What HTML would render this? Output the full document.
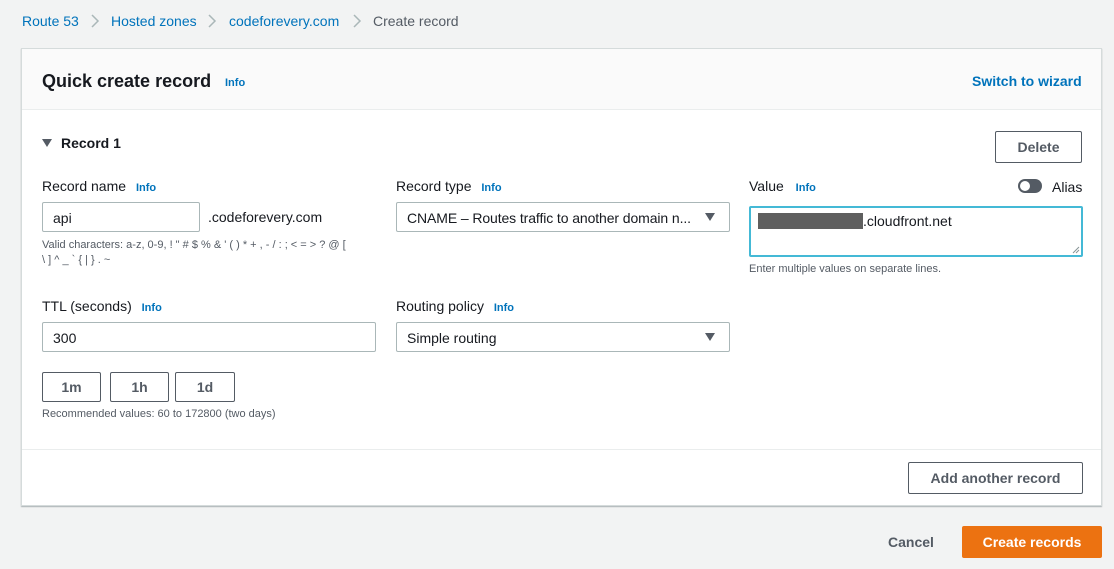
<!DOCTYPE html>
<html><head><style>
*{box-sizing:border-box;margin:0;padding:0}
body{width:1114px;height:569px;background:#f2f3f3;font-family:"Liberation Sans",Arial,sans-serif;color:#16191f;position:relative;overflow:hidden;font-size:14px}
.a{position:absolute;white-space:nowrap}
.blue{color:#0073bb}
.info{color:#0073bb;font-size:11px;font-weight:bold}
.card{position:absolute;left:21px;top:48px;width:1081px;height:458px;background:#fff;border:1px solid #d5dbdb;box-shadow:0 1px 1px rgba(0,28,36,.3)}
.inp{position:absolute;border:1px solid #aab7b8;border-radius:2px;background:#fff;height:30px;padding:7px 10px;font-size:14px;white-space:nowrap;overflow:hidden}
.btn{position:absolute;border:1px solid #545b64;border-radius:2px;background:#fff;font-weight:bold;color:#545b64;font-size:14px;text-align:center}
.lbl{font-size:14px}
.hint{font-size:11px;color:#545b64}
.tri{position:absolute;width:0;height:0;border-left:5px solid transparent;border-right:5px solid transparent;border-top:8px solid #545b64}
</style></head><body>
<div class="a blue" style="left:22px;top:13px">Route 53</div>
<svg class="a" style="left:90px;top:13px" width="10" height="16"><path d="M2 2l6 6-6 6" stroke="#aab7b8" stroke-width="1.5" fill="none"/></svg>
<div class="a blue" style="left:111px;top:13px">Hosted zones</div>
<svg class="a" style="left:207px;top:13px" width="10" height="16"><path d="M2 2l6 6-6 6" stroke="#aab7b8" stroke-width="1.5" fill="none"/></svg>
<div class="a blue" style="left:229px;top:13px">codeforevery.com</div>
<svg class="a" style="left:352px;top:13px" width="10" height="16"><path d="M2 2l6 6-6 6" stroke="#aab7b8" stroke-width="1.5" fill="none"/></svg>
<div class="a" style="left:373px;top:13px;color:#545b64">Create record</div>

<div class="card">
<div style="position:absolute;left:0;top:0;width:100%;height:61px;background:#fafafa;border-bottom:1px solid #eaeded"></div>
<div class="a" style="left:20px;top:22px;font-size:18px;font-weight:bold">Quick create record</div>
<div class="a info" style="left:203px;top:28px">Info</div>
<div class="a blue" style="left:950px;top:24px;font-weight:bold;font-size:14px">Switch to wizard</div>

<div class="tri" style="left:20px;top:90px"></div>
<div class="a" style="left:39px;top:86px;font-weight:bold">Record 1</div>
<div class="btn" style="left:973px;top:82px;width:87px;height:32px;line-height:30px">Delete</div>

<div class="a lbl" style="left:20px;top:129px">Record name <span class="info" style="margin-left:6px">Info</span></div>
<div class="inp" style="left:20px;top:153px;width:158px">api</div>
<div class="a" style="left:186px;top:160px">.codeforevery.com</div>
<div class="a hint" style="left:20px;top:189px;line-height:15px">Valid characters: a-z, 0-9, ! " # $ % &amp; ' ( ) * + , - / : ; &lt; = &gt; ? @ [<br>\ ] ^ _ ` { | } . ~</div>

<div class="a lbl" style="left:374px;top:129px">Record type <span class="info" style="margin-left:6px">Info</span></div>
<div class="inp" style="left:374px;top:153px;width:334px;padding-right:30px;letter-spacing:-0.1px">CNAME – Routes traffic to another domain n...</div>
<div class="tri" style="left:683px;top:164px"></div>

<div class="a lbl" style="left:727px;top:129px">Value <span class="info" style="margin-left:8px">Info</span></div>
<div class="a" style="left:996px;top:130px;width:24px;height:14px;background:#545b64;border-radius:7px"><div style="position:absolute;left:2px;top:2px;width:10px;height:10px;border-radius:5px;background:#fff"></div></div>
<div class="a" style="left:1030px;top:130px">Alias</div>
<div class="a" style="left:727px;top:157px;width:334px;height:51px;border:2px solid #44b9d6;border-radius:2px;background:#fff"></div>
<svg class="a" style="left:1050px;top:197px" width="8" height="8"><path d="M1 7l6-6M4 7l3-3" stroke="#879596" stroke-width="1"/></svg>
<div class="a" style="left:736px;top:164px;width:105px;height:16px;background:#5f5f5f"></div>
<div class="a" style="left:841px;top:164px">.cloudfront.net</div>
<div class="a hint" style="left:727px;top:214px">Enter multiple values on separate lines.</div>

<div class="a lbl" style="left:20px;top:249px">TTL (seconds) <span class="info" style="margin-left:6px">Info</span></div>
<div class="inp" style="left:20px;top:273px;width:334px">300</div>
<div class="a lbl" style="left:374px;top:249px">Routing policy <span class="info" style="margin-left:6px">Info</span></div>
<div class="inp" style="left:374px;top:273px;width:334px">Simple routing</div>
<div class="tri" style="left:683px;top:284px"></div>

<div class="btn" style="left:20px;top:323px;width:59px;height:30px;line-height:28px">1m</div>
<div class="btn" style="left:88px;top:323px;width:59px;height:30px;line-height:28px">1h</div>
<div class="btn" style="left:153px;top:323px;width:60px;height:30px;line-height:28px">1d</div>
<div class="a hint" style="left:20px;top:359px">Recommended values: 60 to 172800 (two days)</div>

<div style="position:absolute;left:0;top:400px;width:100%;border-top:1px solid #eaeded"></div>
<div class="btn" style="left:886px;top:413px;width:175px;height:32px;line-height:30px">Add another record</div>
</div>

<div class="a" style="left:888px;top:534px;font-weight:bold;color:#545b64">Cancel</div>
<div class="a" style="left:962px;top:526px;width:140px;height:32px;background:#ec7211;border-radius:2px;color:#fff;font-weight:bold;text-align:center;line-height:32px">Create records</div>
</body></html>
